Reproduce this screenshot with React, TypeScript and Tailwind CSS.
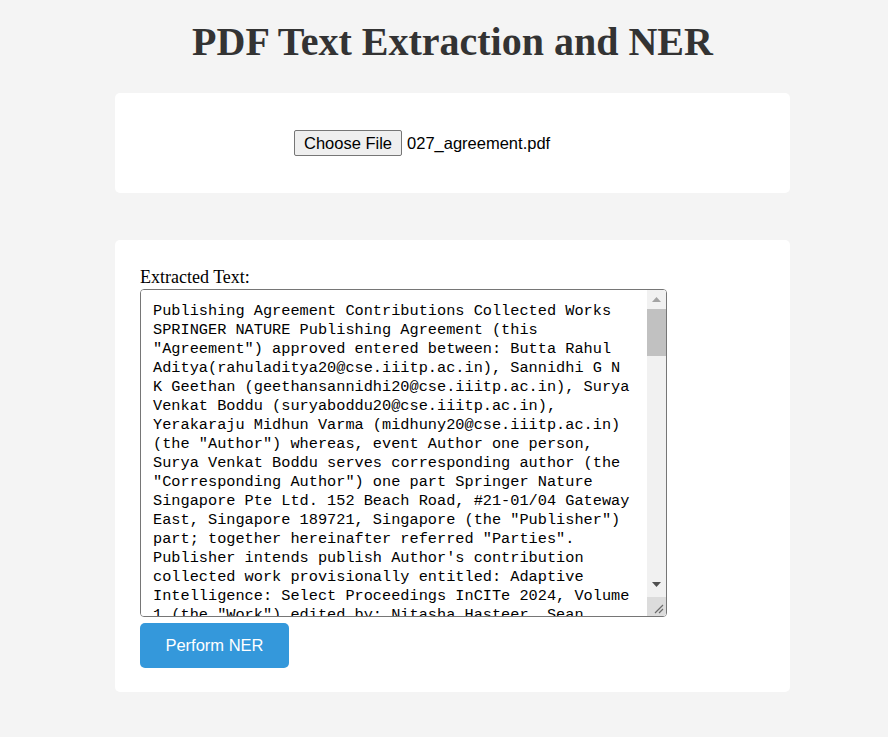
import React from 'react';

const extracted = `Publishing Agreement Contributions Collected Works SPRINGER NATURE Publishing Agreement (this "Agreement") approved entered between: Butta Rahul Aditya(rahuladitya20@cse.iiitp.ac.in), Sannidhi G N K Geethan (geethansannidhi20@cse.iiitp.ac.in), Surya Venkat Boddu (suryaboddu20@cse.iiitp.ac.in), Yerakaraju Midhun Varma (midhuny20@cse.iiitp.ac.in) (the "Author") whereas, event Author one person, Surya Venkat Boddu serves corresponding author (the "Corresponding Author") one part Springer Nature Singapore Pte Ltd. 152 Beach Road, #21-01/04 Gateway East, Singapore 189721, Singapore (the "Publisher") part; together hereinafter referred "Parties". Publisher intends publish Author's contribution collected work provisionally entitled: Adaptive Intelligence: Select Proceedings InCITe 2024, Volume 1 (the "Work") edited by: Nitasha Hasteer, Sean McLoone, Manju Khari, Purushottam Sharma (the "Editor"). Agreement sets terms upon Publisher will publish contribution. 1. Grant of Rights. In consideration of the agreement to publish the contribution, the Author grants to the Publisher, without limitation in time, space or otherwise, the exclusive and unrestricted right to reproduce, publish, distribute, transmit and make available the contribution.`;

// textarea scrollbar, drawn by hand (headless chrome hides the native one)
const FakeScrollbar = () => (
  <div className="absolute right-[1px] top-[1px] bottom-[1px] w-[19px] flex flex-col bg-[#f1f1f1] rounded-r-[3px] overflow-hidden pointer-events-none">
    <div className="h-[19px] flex items-center justify-center">
      <svg width="9" height="5" viewBox="0 0 9 5">
        <path d="M0 5 L4.5 0 L9 5 Z" fill="#a3a3a3" />
      </svg>
    </div>
    <div className="h-[47px] bg-[#c1c1c1]" />
    <div className="flex-1" />
    <div className="h-[24px] flex items-center justify-center pb-[2px]">
      <svg width="9" height="5" viewBox="0 0 9 5">
        <path d="M0 0 L9 0 L4.5 5 Z" fill="#505050" />
      </svg>
    </div>
    <div className="h-[19px] bg-[#dcdcdc]">
      <svg width="19" height="19" viewBox="0 0 19 19">
        <path d="M16 8 L8 16 M16 12 L12 16" stroke="#6b6b6b" strokeWidth="1.2" />
      </svg>
    </div>
  </div>
);

const App = () => {
  return (
    <div className="min-h-screen bg-[#f4f4f4] pl-[17px] pt-[19px] pb-[45px] flex justify-center">
      <div className="w-[675px]">
        <h1 className="text-center text-[40px] leading-[46px] font-bold text-[#333333] font-['Liberation_Serif',serif] mb-[28px]">
          PDF Text Extraction and NER
        </h1>

        <div className="bg-white rounded-[5px] py-[37px]">
          <div className="w-[317px] mx-auto flex items-center font-['Liberation_Sans',Arial,sans-serif] text-[16.5px] text-black">
            <button className="h-[26px] px-[9px] bg-[#efefef] border border-[#767676] rounded-[2px] leading-none">
              Choose File
            </button>
            <span className="ml-[5px]">027_agreement.pdf</span>
          </div>
        </div>

        <div className="bg-white rounded-[5px] mt-[47px] pt-[25px] px-[25px] pb-[24px]">
          <div className="font-['Liberation_Serif',serif] text-[18px] leading-[24px] text-black">
            Extracted Text:
          </div>
          <div className="flex flex-col items-start gap-[6px]">
            <div className="relative w-[527px] h-[328px]">
              <textarea
                readOnly
                defaultValue={extracted}
                className="block w-full h-full border border-[#767676] rounded-[4px] py-[12px] pl-[12px] pr-[31px] resize-none font-['Liberation_Mono',monospace] text-[15.27px] leading-[19px] text-black bg-white outline-none"
              />
              <FakeScrollbar />
            </div>
            <button className="w-[149px] h-[45px] bg-[#3498db] rounded-[5px] text-white text-[16.5px] font-['Liberation_Sans',Arial,sans-serif]">
              Perform NER
            </button>
          </div>
        </div>
      </div>
    </div>
  );
};

export default App;
